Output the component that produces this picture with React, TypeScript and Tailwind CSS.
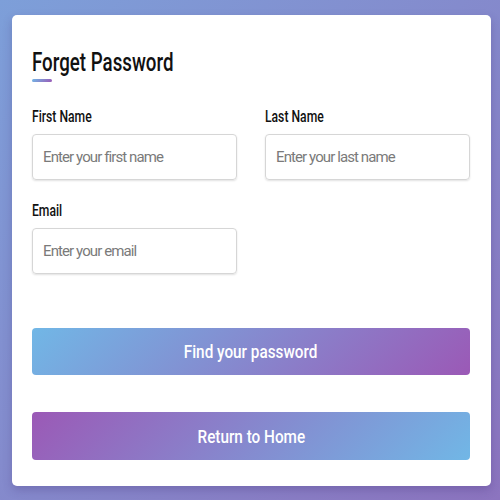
import React from 'react';

const font = "font-['Roboto','Liberation_Sans',sans-serif]";

const Field = ({ label, placeholder }: { label: string; placeholder: string }) => (
  <div className="flex flex-col">
    <label className="h-[22px] text-[16px] leading-[22px] font-medium text-[#111]">
      <span className="inline-block origin-left scale-x-[0.76]">{label}</span>
    </label>
    <input
      type="text"
      placeholder={placeholder}
      className="mt-[6px] h-[46px] rounded-[4px] border border-[#d6d6d6] px-[10px] text-[15px] tracking-[-0.9px] text-[#333] shadow-[0_1px_2px_rgba(0,0,0,0.12)] outline-none placeholder:text-[#7a7a7a]"
    />
  </div>
);

export default function App() {
  return (
    <div
      className={`h-[500px] w-[500px] overflow-hidden bg-[linear-gradient(135deg,#7d9fd9,#8c74bf)] pl-[12px] pt-[15px] ${font}`}
    >
      <div className="h-[471px] w-[479px] rounded-[5px] bg-white pl-[20px] pr-[21px] pt-[34px] shadow-[0_4px_10px_rgba(60,40,110,0.25)]">
        <h1 className="h-[26px] text-[26px] leading-[26px] font-medium text-[#111]">
          <span className="inline-block origin-left scale-x-[0.72]">Forget Password</span>
        </h1>
        <div className="mt-[4px] h-[3px] w-[20px] rounded-full bg-[linear-gradient(135deg,#71b7e6,#9b59b6)]" />

        <div className="mt-[24px] grid grid-cols-[205px_205px] gap-x-[28px] gap-y-[20px]">
          <Field label="First Name" placeholder="Enter your first name" />
          <Field label="Last Name" placeholder="Enter your last name" />
          <Field label="Email" placeholder="Enter your email" />
        </div>

        <button className="mt-[54px] flex h-[47px] w-[438px] items-center justify-center rounded-[4px] bg-[linear-gradient(135deg,#71b7e6,#9b59b6)] text-[18px] font-medium text-white">
          <span className="inline-block scale-x-[0.85]">Find your password</span>
        </button>
        <button className="mt-[37px] flex h-[48px] w-[438px] items-center justify-center rounded-[4px] bg-[linear-gradient(135deg,#9b59b6,#71b7e6)] text-[18px] font-medium text-white">
          <span className="inline-block scale-x-[0.85]">Return to Home</span>
        </button>
      </div>
    </div>
  );
}
